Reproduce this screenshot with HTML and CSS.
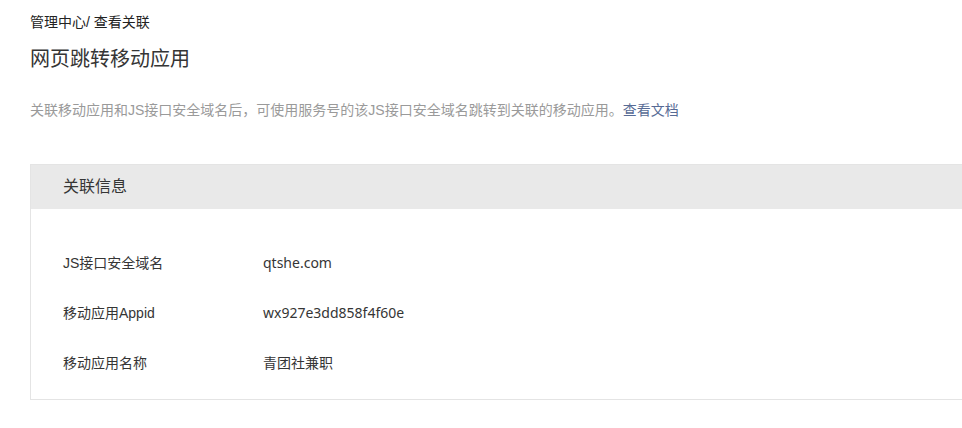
FILE: index.html
```html
<!DOCTYPE html>
<html lang="zh-CN">
<head>
<meta charset="utf-8">
<title>网页跳转移动应用</title>
<link rel="stylesheet" href="styles.css">
</head>
<body>
<div class="page">
  <div class="breadcrumb">管理中心/ 查看关联</div>
  <h1 class="title">网页跳转移动应用</h1>
  <p class="desc">关联移动应用和JS接口安全域名后，可使用服务号的该JS接口安全域名跳转到关联的移动应用。<a class="link" href="#">查看文档</a></p>
  <div class="panel">
    <div class="panel-head">关联信息</div>
    <div class="panel-body">
      <div class="row"><span class="label">JS接口安全域名</span><span class="value">qtshe.com</span></div>
      <div class="row"><span class="label">移动应用Appid</span><span class="value">wx927e3dd858f4f60e</span></div>
      <div class="row"><span class="label">移动应用名称</span><span class="value">青团社兼职</span></div>
    </div>
  </div>
</div>
</body>
</html>
```
FILE: styles.css
```css
html, body {
  margin: 0;
  padding: 0;
  background: #ffffff;
}
body {
  font-family: "Liberation Sans", "Noto Sans CJK SC", sans-serif;
  color: #353535;
  overflow: hidden;
}
.page {
  padding: 12px 0 0 30px;
  overflow: hidden;
}
.breadcrumb {
  font-size: 14px;
  line-height: 20px;
  color: #222;
}
.title {
  margin: 13px 0 0;
  font-size: 20px;
  line-height: 28px;
  font-weight: normal;
  color: #353535;
}
.desc {
  margin: 27px 0 0;
  font-size: 14px;
  line-height: 20px;
  color: #9a9a9a;
}
.link {
  color: #576b95;
  text-decoration: none;
}
.panel {
  margin: 44px -40px 0 0;
  border: 1px solid #e4e4e4;
}
.panel-head {
  height: 44px;
  line-height: 44px;
  padding-left: 32px;
  background: #e9e9e9;
  font-size: 16px;
  color: #353535;
}
.panel-body {
  padding: 28px 0 12px 32px;
}
.row {
  display: flex;
  height: 50px;
  align-items: center;
  font-size: 14px;
  color: #353535;
}
.label {
  width: 200px;
}
.value {
  font-family: "Noto Sans", "Noto Sans CJK SC", sans-serif;
}
```
